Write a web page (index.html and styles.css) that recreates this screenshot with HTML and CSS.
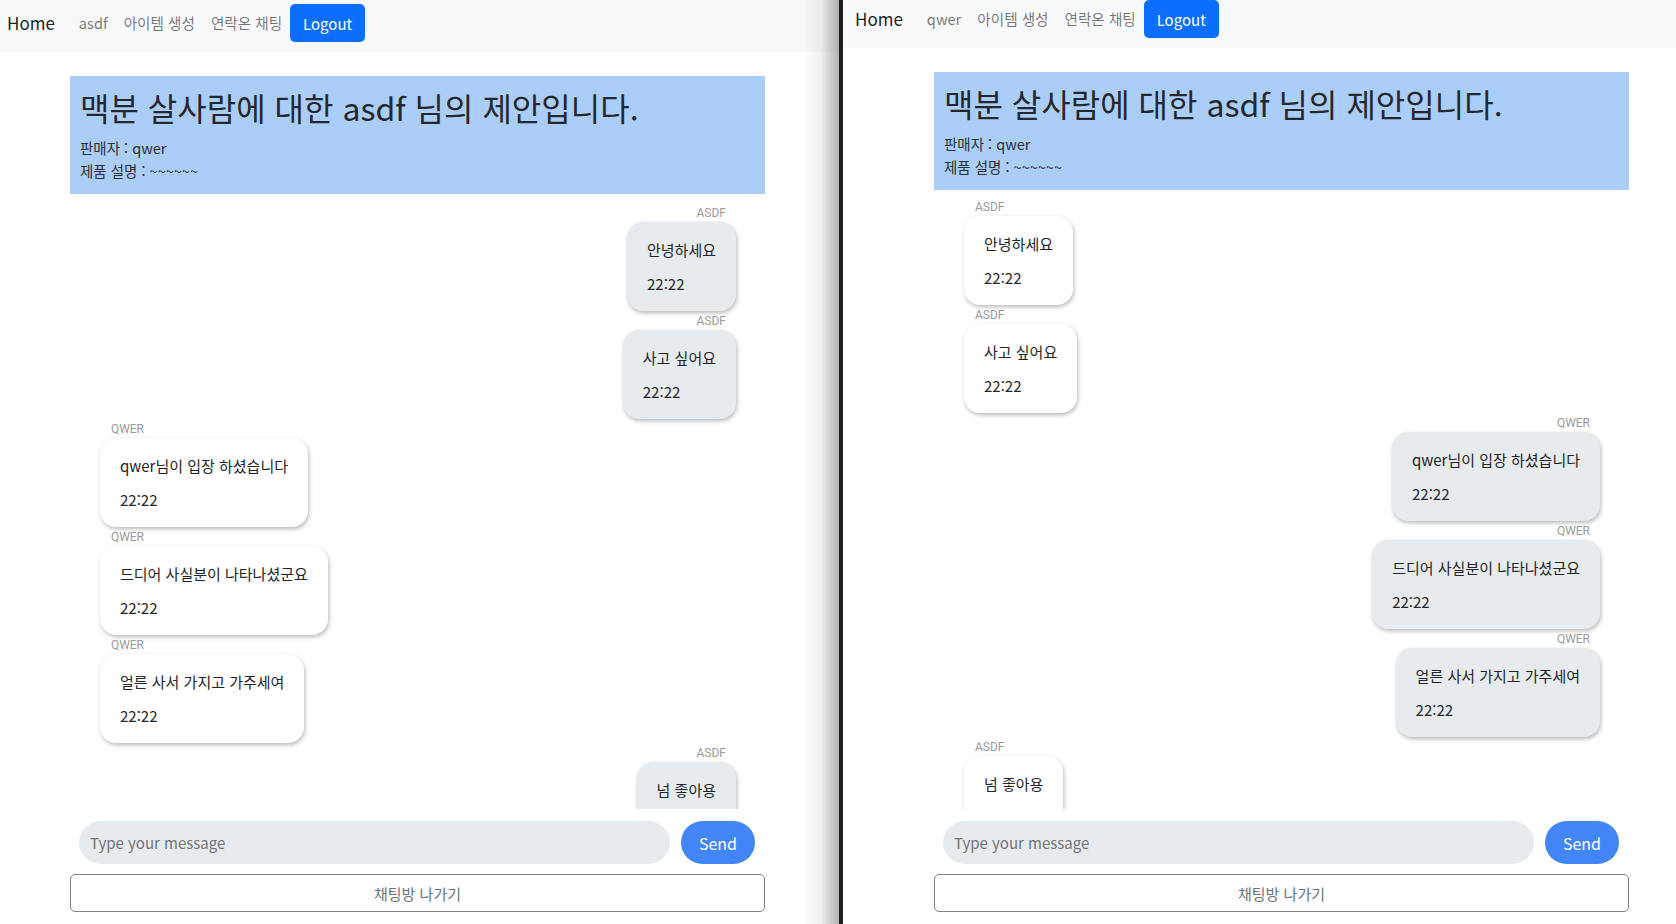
FILE: index.html
```html
<!DOCTYPE html>
<html lang="ko">
<head>
<meta charset="utf-8">
<title>Chat</title>
<link rel="stylesheet" href="styles.css">
</head>
<body>
<div class="screen">
  <section class="pane pane-left">
    <div class="window">
      <nav class="navbar">
        <span class="brand">Home</span>
        <span class="nav-link">asdf</span>
        <span class="nav-link">아이템 생성</span>
        <span class="nav-link">연락온 채팅</span>
        <span class="btn-logout">Logout</span>
      </nav>
      <div class="container">
        <div class="offer">
          <h2 class="offer-title">맥분 살사람에 대한 asdf 님의 제안입니다.</h2>
          <p class="offer-line">판매자 : qwer</p>
          <p class="offer-line">제품 설명 : ~~~~~~</p>
        </div>
        <div class="chat">
          <div class="msg mine"><div class="sender">ASDF</div><div class="bubble"><p>안녕하세요</p><p>22:22</p></div></div>
          <div class="msg mine"><div class="sender">ASDF</div><div class="bubble"><p>사고 싶어요</p><p>22:22</p></div></div>
          <div class="msg"><div class="sender">QWER</div><div class="bubble"><p>qwer님이 입장 하셨습니다</p><p>22:22</p></div></div>
          <div class="msg"><div class="sender">QWER</div><div class="bubble"><p>드디어 사실분이 나타나셨군요</p><p>22:22</p></div></div>
          <div class="msg"><div class="sender">QWER</div><div class="bubble"><p>얼른 사서 가지고 가주세여</p><p>22:22</p></div></div>
          <div class="msg mine"><div class="sender">ASDF</div><div class="bubble"><p>넘 좋아용</p><p>22:22</p></div></div>
        </div>
        <div class="composer">
          <div class="input">Type your message</div>
          <span class="btn-send">Send</span>
        </div>
        <div class="btn-exit">채팅방 나가기</div>
      </div>
    </div>
  </section>
  <div class="divider"></div>
  <section class="pane pane-right">
    <div class="window">
      <nav class="navbar">
        <span class="brand">Home</span>
        <span class="nav-link">qwer</span>
        <span class="nav-link">아이템 생성</span>
        <span class="nav-link">연락온 채팅</span>
        <span class="btn-logout">Logout</span>
      </nav>
      <div class="container">
        <div class="offer">
          <h2 class="offer-title">맥분 살사람에 대한 asdf 님의 제안입니다.</h2>
          <p class="offer-line">판매자 : qwer</p>
          <p class="offer-line">제품 설명 : ~~~~~~</p>
        </div>
        <div class="chat">
          <div class="msg"><div class="sender">ASDF</div><div class="bubble"><p>안녕하세요</p><p>22:22</p></div></div>
          <div class="msg"><div class="sender">ASDF</div><div class="bubble"><p>사고 싶어요</p><p>22:22</p></div></div>
          <div class="msg mine"><div class="sender">QWER</div><div class="bubble"><p>qwer님이 입장 하셨습니다</p><p>22:22</p></div></div>
          <div class="msg mine"><div class="sender">QWER</div><div class="bubble"><p>드디어 사실분이 나타나셨군요</p><p>22:22</p></div></div>
          <div class="msg mine"><div class="sender">QWER</div><div class="bubble"><p>얼른 사서 가지고 가주세여</p><p>22:22</p></div></div>
          <div class="msg"><div class="sender">ASDF</div><div class="bubble"><p>넘 좋아용</p><p>22:22</p></div></div>
        </div>
        <div class="composer">
          <div class="input">Type your message</div>
          <span class="btn-send">Send</span>
        </div>
        <div class="btn-exit">채팅방 나가기</div>
      </div>
    </div>
  </section>
</div>
</body>
</html>
```
FILE: styles.css
```css
* { box-sizing: border-box; }

html, body {
  margin: 0;
  padding: 0;
  background: #ffffff;
}

body {
  width: 1676px;
  height: 924px;
  overflow: hidden;
  font-family: "Noto Sans CJK KR", "Noto Sans", sans-serif;
  color: #212529;
}

.screen {
  display: flex;
  width: 1676px;
  height: 924px;
}

.pane {
  position: relative;
  overflow: hidden;
  height: 924px;
}

.pane-left {
  width: 839px;
  flex: none;
}

.pane-left::after {
  content: "";
  position: absolute;
  top: 0;
  right: 0;
  width: 36px;
  height: 100%;
  background: linear-gradient(to right, rgba(0, 0, 0, 0), rgba(0, 0, 0, 0.06) 50%, rgba(0, 0, 0, 0.3));
  pointer-events: none;
}

.divider {
  width: 4px;
  flex: none;
  background: #1f1f1f;
}

.pane-right {
  flex: 1;
}

.window {
  display: flex;
  flex-direction: column;
  height: 924px;
}

.pane-right .window {
  margin-top: -4px;
  height: 928px;
}

/* navbar */
.navbar {
  flex: none;
  height: 52px;
  display: flex;
  align-items: center;
  background: #f8f9fa;
  padding: 0 0 6px 7px;
}

.pane-right .navbar {
  padding-left: 12px;
}

.brand {
  font-size: 17px;
  color: rgba(0, 0, 0, 0.9);
  margin-right: 16px;
  line-height: 24px;
}

.nav-link {
  font-size: 14.6px;
  color: rgba(0, 0, 0, 0.55);
  padding: 0 8px;
  line-height: 22px;
}

.btn-logout {
  width: 75px;
  height: 38px;
  display: flex;
  align-items: center;
  justify-content: center;
  background: #0d6efd;
  color: #ffffff;
  font-size: 15px;
  border-radius: 5px;
}

/* container */
.container {
  flex: 1;
  min-height: 0;
  display: flex;
  flex-direction: column;
  width: 695px;
  margin-left: 70px;
  padding-top: 24px;
}

.pane-right .container {
  margin-left: 91px;
}

.offer {
  flex: none;
  background: #abcef8;
  padding: 12px 10px 12px 10px;
}

.offer-title {
  margin: 0 0 11px 0;
  font-size: 32px;
  font-weight: 400;
  line-height: 38px;
  color: #24282c;
}

.offer-line {
  margin: 0;
  font-size: 14.5px;
  line-height: 22.5px;
  color: #2b2f33;
}

/* chat */
.chat {
  flex: 1;
  min-height: 0;
  overflow: hidden;
  padding: 12px 29px 0 30px;
  margin-bottom: 12px;
}

.pane-right .chat {
  padding-top: 10px;
}

.msg {
  display: flex;
  flex-direction: column;
  align-items: flex-start;
  margin-bottom: 3px;
}

.msg.mine {
  align-items: flex-end;
}

.sender {
  font-family: Roboto, "Liberation Sans", sans-serif;
  font-size: 12px;
  line-height: 14px;
  color: #9a9a9a;
  padding: 0 10px 0 11px;
  margin-bottom: 2px;
}

.bubble {
  background: #ffffff;
  border-radius: 16px;
  padding: 16px 20px 15px 20px;
  box-shadow: 1px 2px 4px rgba(0, 0, 0, 0.28);
  font-size: 15px;
  line-height: 24px;
  color: #212529;
  white-space: nowrap;
}

.msg.mine .bubble {
  background: #e8ebee;
}

.bubble p {
  margin: 0;
}

.bubble p + p {
  margin-top: 10px;
}

/* composer */
.composer {
  flex: none;
  display: flex;
  gap: 11px;
  padding: 0 10px 0 9px;
  height: 43px;
}

.input {
  flex: 1;
  height: 43px;
  border-radius: 22px;
  background: #e8ebee;
  color: #6f757b;
  font-size: 15px;
  display: flex;
  align-items: center;
  padding-left: 11px;
}

.btn-send {
  width: 74px;
  height: 43px;
  border-radius: 22px;
  background: #4285f4;
  color: #ffffff;
  font-size: 16px;
  display: flex;
  align-items: center;
  justify-content: center;
}

.btn-exit {
  flex: none;
  margin: 10px 0 12px 0;
  height: 38px;
  border: 1px solid #7d838a;
  border-radius: 5px;
  display: flex;
  align-items: center;
  justify-content: center;
  color: #6c737a;
  font-size: 15px;
}
```
